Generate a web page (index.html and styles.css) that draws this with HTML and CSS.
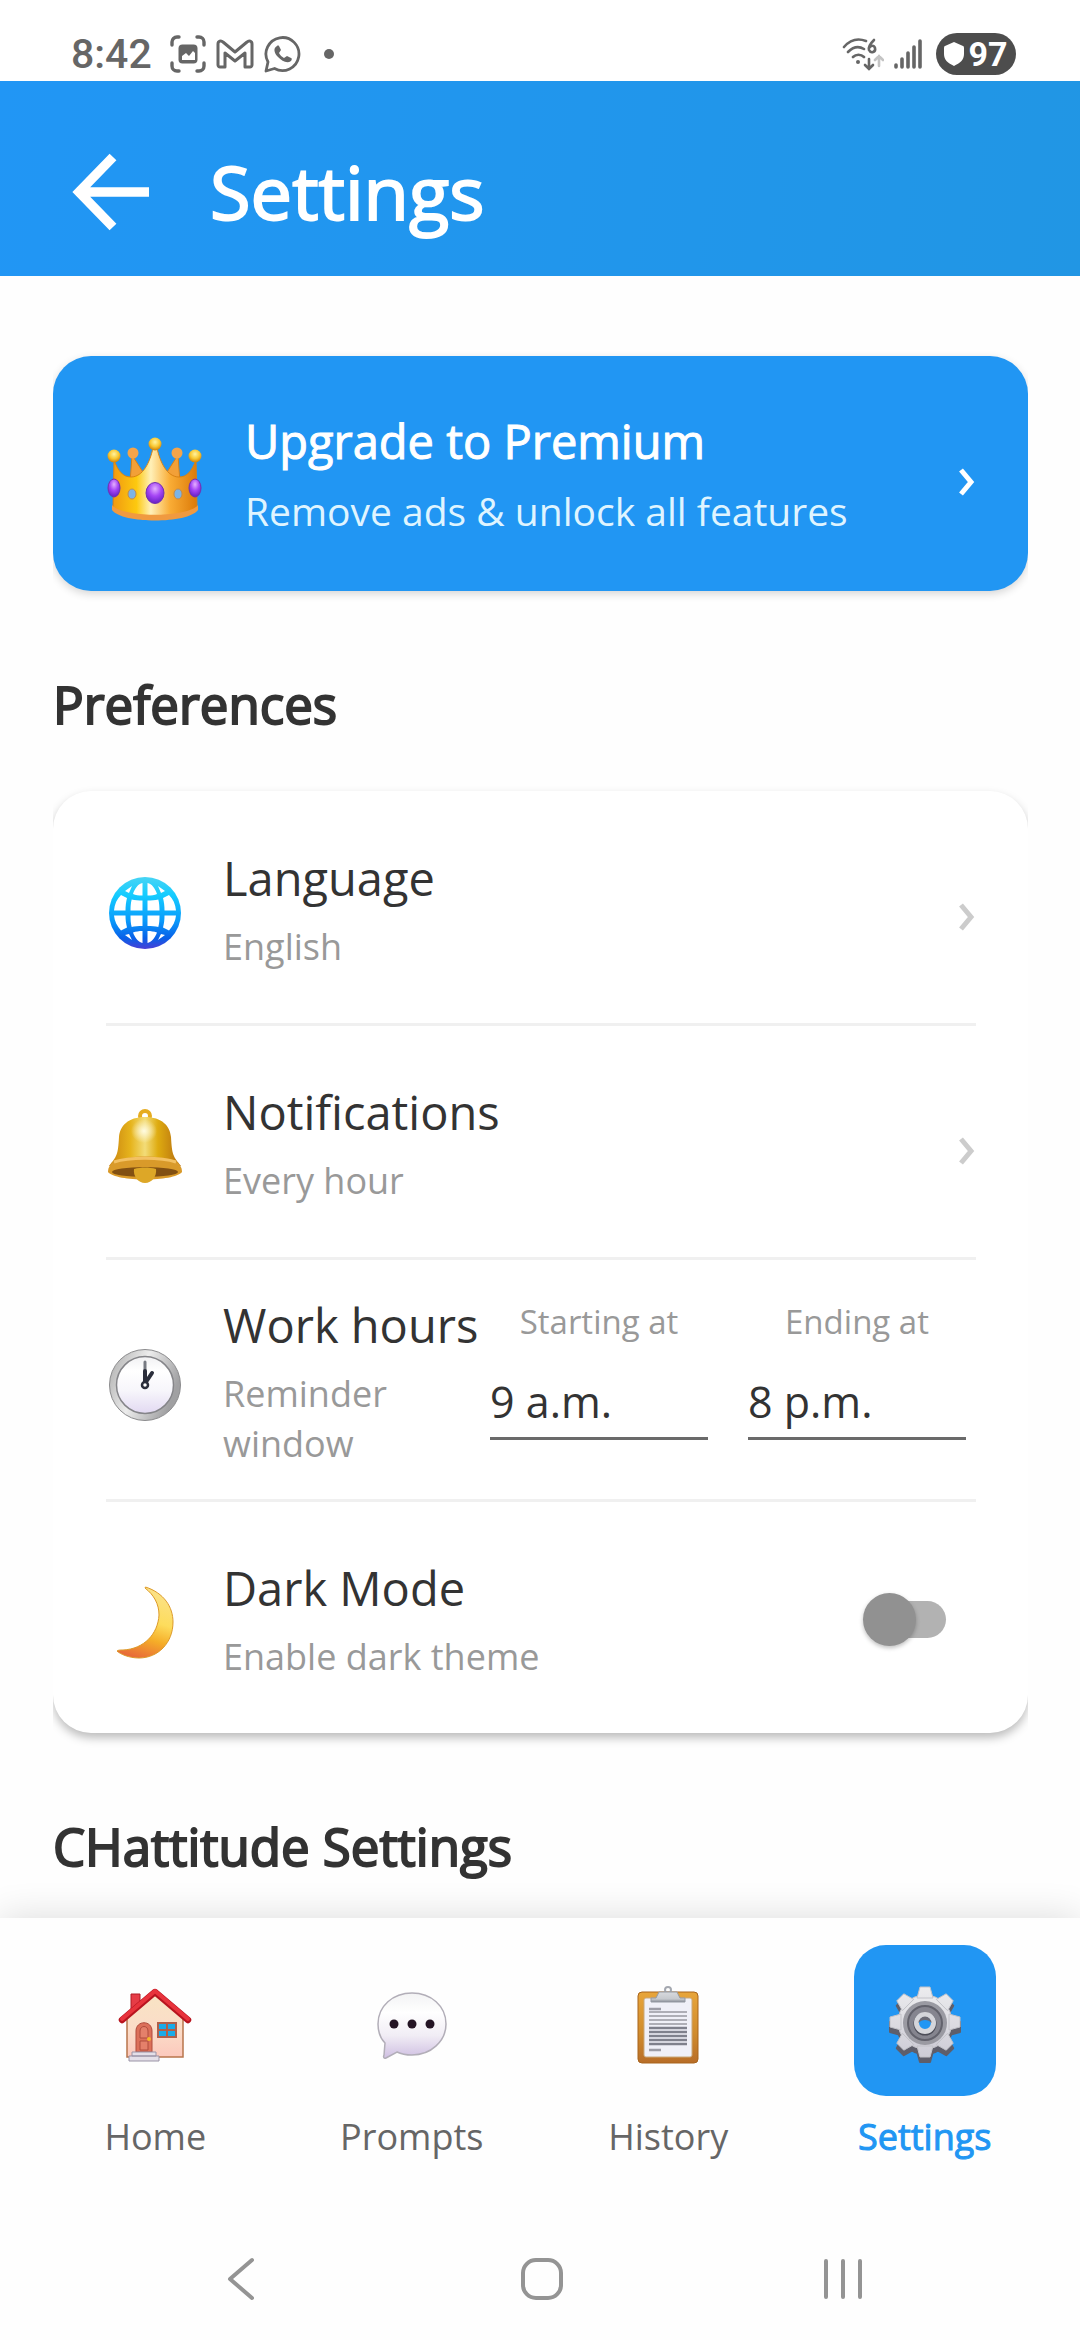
FILE: index.html
```html
<!DOCTYPE html>
<html lang="en">
<head>
<meta charset="utf-8">
<meta name="viewport" content="width=device-width, initial-scale=1">
<title>Settings</title>
<link rel="stylesheet" href="styles.css">
</head>
<body>
<div class="status-bar">
  <span class="clock">8:42</span>
  <svg class="status-icon capture" width="36" height="38" viewBox="0 0 36 38" fill="none" stroke="#666" stroke-width="3.4" stroke-linecap="round">
    <path d="M2 10V7a5 5 0 0 1 5-5h2M27 2h2a5 5 0 0 1 5 5v3M34 28v3a5 5 0 0 1-5 5h-2M9 36H7a5 5 0 0 1-5-5v-3"/>
    <rect x="8.500" y="9.500" width="19" height="19" rx="4" fill="#666" stroke="none"/>
    <path d="M12 25v-4l4-3 3 3 4-5 2 2v7z" fill="#fff" stroke="none"/>
  </svg>
  <svg class="status-icon mail" width="38" height="30" viewBox="0 0 38 30" fill="none" stroke="#666" stroke-width="3" stroke-linejoin="round">
    <path d="M2 26V5c0-3 3-4 5-2l12 10L31 3c2-2 5-1 5 2v21c0 1-1 2-2 2h-5V14L19 22 9 14v14H4c-1 0-2-1-2-2z"/>
  </svg>
  <svg class="status-icon chat" width="38" height="38" viewBox="0 0 38 38" fill="none" stroke="#666" stroke-width="2.8" stroke-linejoin="round">
    <path d="M2 36l2-9a16.500 16.500 0 1 1 6.500 6.500z"/>
    <path d="M13 11c-4 2-3 7 1 11s9 7 13 4c1-1 1-3 0-3l-4-2-3 2c-2-1-4-3-5-5l2-3-2-4c-1-1-1-1-2 0z" fill="#666" stroke="none"/>
  </svg>
  <svg class="status-icon more" width="10" height="10" viewBox="0 0 10 10"><circle cx="5" cy="5" r="5" fill="#666"/></svg>
  <span class="spacer"></span>
  <svg class="status-icon wifi" width="42" height="34" viewBox="0 0 42 34" fill="none" stroke="#666" stroke-width="2.600" stroke-linecap="round">
    <path d="M2 10C8 3 16 1 24 4M6 15c5-5 11-6 16-3M11 20c3-3 8-3 11 0"/>
    <circle cx="16" cy="25" r="2" fill="#666" stroke="none"/>
    <path d="M32 3c-4 4-6 7-5 10 2 4 7 2 6-2-1-3-4-3-6 0"/>
    <path d="M27 22v9M23 28l4 4 4-4"/>
    <path d="M37 29V19M33 23l4-4 4 4" stroke="#c4c4c4"/>
  </svg>
  <svg class="status-icon signal" width="28" height="30" viewBox="0 0 28 30" stroke="#666" stroke-width="3.600" stroke-linecap="round">
    <path d="M2 26v2M8 20v8M14 14v14M20 8v20M26 2v26"/>
  </svg>
  <span class="battery">
    <svg width="20" height="24" viewBox="0 0 20 24"><path d="M10 0l9 4q1 0 1 2v6c0 6-4 9-10 12C4 21 0 18 0 12V6q0-2 1-2z" fill="#fff"/></svg>
    <span>97</span>
  </span>
</div>

<header class="app-header">
  <button class="back" type="button" aria-label="Back">
    <svg width="80" height="80" viewBox="0 0 80 80" fill="none" stroke="#fff" stroke-width="9.500">
      <path d="M79 40H9M43 5L9 40l34 35"/>
    </svg>
  </button>
  <h1 class="app-title">Settings</h1>
</header>

<main class="content">
  <button class="premium" type="button">
    <svg class="crown" width="96" height="96" viewBox="0 0 96 96">
      <defs>
        <linearGradient id="crown-gold" x1="0" x2="1" y1="0" y2="0">
          <stop offset="0" stop-color="#f09a10"/><stop offset=".28" stop-color="#fdc90f"/><stop offset=".45" stop-color="#fff0b8"/><stop offset=".68" stop-color="#f9ac35"/><stop offset="1" stop-color="#dc7a08"/>
        </linearGradient>
        <radialGradient id="crown-ball" cx=".5" cy=".35" r=".6"><stop offset="0" stop-color="#fff3a0"/><stop offset=".6" stop-color="#f8c832"/><stop offset="1" stop-color="#d48a10"/></radialGradient>
        <radialGradient id="crown-gem" cx=".5" cy=".3" r=".7"><stop offset="0" stop-color="#e4b0ff"/><stop offset=".5" stop-color="#a545f5"/><stop offset="1" stop-color="#6420c4"/></radialGradient>
      </defs>
      <path d="M26 29l-2 28h20zM72 29l2 28H54z" fill="#f2a038" stroke="#d68016"/>
      <circle cx="27" cy="27" r="5.500" fill="#f3a44a"/><circle cx="71" cy="27" r="5.500" fill="#f3a44a"/>
      <path d="M8 34C12 45 17 51 25 51 37 51 44 36 47 22h4c3 14 10 29 22 29 8 0 13-6 17-17l1 48c-10 13-74 13-84 0z" fill="url(#crown-gold)" stroke="#d98213"/>
      <path d="M6 79c10 13 76 13 86 0v5c-10 14-76 14-86 0z" fill="#f09a40"/>
      <circle cx="8" cy="30" r="6.500" fill="url(#crown-ball)"/><circle cx="49" cy="18" r="6.500" fill="url(#crown-ball)"/><circle cx="89" cy="30" r="6.500" fill="url(#crown-ball)"/>
      <g fill="url(#crown-gem)" stroke="#7230b0"><ellipse cx="49" cy="67" rx="9" ry="10.500"/><ellipse cx="8" cy="62" rx="6" ry="9"/><ellipse cx="89" cy="62" rx="6" ry="9"/></g>
      <g fill="#7cb4e6" stroke="#bd8b52"><ellipse cx="26" cy="68" rx="4" ry="5"/><ellipse cx="72" cy="68" rx="4" ry="5"/></g>
    </svg>
    <span class="premium-text">
      <span class="premium-title">Upgrade to Premium</span>
      <span class="premium-sub">Remove ads &amp; unlock all features</span>
    </span>
    <svg class="chevron" width="18" height="44" viewBox="0 0 18 44"><path d="M3 18l10 12L3 42"/></svg>
  </button>

  <h2 class="section-title">Preferences</h2>

  <section class="card">
    <a class="row" href="#language">
      <svg class="row-icon" width="78" height="86" viewBox="0 0 78 86">
        <defs><linearGradient id="globe" x1="0" x2="0" y1="0" y2="1"><stop offset="0" stop-color="#48d4f4"/><stop offset=".25" stop-color="#15ccff"/><stop offset=".6" stop-color="#0a9cfb"/><stop offset=".85" stop-color="#0860e8"/><stop offset="1" stop-color="#4a3fd6"/></linearGradient></defs>
        <circle cx="39" cy="47" r="36" fill="url(#globe)"/>
        <g fill="#fff">
          <path d="M36.500 17v12.500c-4 0-7-.5-9.500-1.500 2-6 5-10 9.500-11zM41.500 17v12.500c4 0 7-.5 9.500-1.500-2-6-5-10-9.500-11z"/>
          <path d="M26 20l-7 5 4 2zM52 20l7 5-4 2z"/>
          <path d="M36.500 34.500V44.500H24.500c0-4 .3-8 1.200-11 3 .7 7 1 10.800 1zM41.500 34.500V44.500H53.500c0-4-.3-8-1.200-11-3 .7-7 1-10.800 1z"/>
          <path d="M15 29l6 3c-1 4-1.500 8-1.500 12.500H8C8.500 38 11 33 15 29zM63 29l-6 3c1 4 1.500 8 1.500 12.500H70C69.500 38 67 33 63 29z"/>
          <path d="M8 49.500h11.500c0 4.500.5 8 1.500 12l-6 3C11 60 8.500 55 8 49.500zM70 49.500H58.500c0 4.500-.5 8-1.500 12l6 3c4-4.500 6.500-9.500 7-15z"/>
          <path d="M24.500 49.500H36.500V60c-4 0-8 .3-10.800 1-.9-3-1.200-7-1.200-11.500zM53.500 49.500H41.500V60c4 0 8 .3 10.800 1 .9-3 1.200-7 1.200-11.500z"/>
          <path d="M36.500 65v12c-4-1-7.500-5-9.500-10.500 3-1 6-1.500 9.500-1.500zM41.500 65v12c4-1 7.500-5 9.500-10.500-3-1-6-1.500-9.500-1.500z"/>
          <path d="M19 69l4-1 3 6zM59 69l-4-1-3 6z"/>
        </g>
      </svg>
      <span class="row-text"><span class="row-title">Language</span><span class="row-sub">English</span></span>
      <svg class="chevron" width="18" height="44" viewBox="0 0 18 44"><path d="M3 18l10 12L3 42"/></svg>
    </a>

    <a class="row" href="#notifications">
      <svg class="row-icon" width="78" height="86" viewBox="0 0 78 86">
        <defs>
          <linearGradient id="bell" x1="0" x2="1" y1="0" y2="0"><stop offset="0" stop-color="#c98310"/><stop offset=".3" stop-color="#e6b41c"/><stop offset=".5" stop-color="#f3dc78"/><stop offset=".68" stop-color="#deab10"/><stop offset="1" stop-color="#b56c10"/></linearGradient>
          <radialGradient id="bell-shine"><stop offset="0" stop-color="#fffbe0"/><stop offset="1" stop-color="#fffbe0" stop-opacity="0"/></radialGradient>
        </defs>
        <circle cx="39" cy="16" r="5" fill="none" stroke="#e6ac20" stroke-width="4"/>
        <path d="M39 17C22 17 14 26 13 37c-1 18-2 19-10 29h72c-8-10-9-11-10-29-1-11-9-20-26-20z" fill="url(#bell)"/>
        <ellipse cx="38" cy="31" rx="13" ry="12" fill="url(#bell-shine)"/>
        <path d="M8 61c15-6 47-6 62 0 5 4 6 8 6 11-8 10-66 10-74 0 0-3 1-7 6-11z" fill="#d99a2a"/>
        <ellipse cx="39" cy="72" rx="33" ry="5" fill="#825012"/>
        <path d="M28 69c7-2 15-2 22 0 1 7-4 14-11 14s-12-7-11-14z" fill="#dda727"/>
        <path d="M8 62c15-5 47-5 62 0" stroke="#f3c163" stroke-width="3" fill="none"/>
      </svg>
      <span class="row-text"><span class="row-title">Notifications</span><span class="row-sub">Every hour</span></span>
      <svg class="chevron" width="18" height="44" viewBox="0 0 18 44"><path d="M3 18l10 12L3 42"/></svg>
    </a>

    <div class="row row-hours">
      <svg class="row-icon" width="78" height="86" viewBox="0 0 78 86">
        <defs>
          <linearGradient id="rim" x1="0" x2="1" y1="0" y2=".4"><stop offset="0" stop-color="#aaa"/><stop offset=".5" stop-color="#ececec"/><stop offset="1" stop-color="#a0a0a2"/></linearGradient>
          <linearGradient id="dial" x1="0" x2="0" y1="0" y2="1"><stop offset="0" stop-color="#f1f1f3"/><stop offset=".25" stop-color="#fff"/><stop offset=".6" stop-color="#f7f6fb"/><stop offset="1" stop-color="#e2d9f2"/></linearGradient>
        </defs>
        <circle cx="39" cy="47" r="35.500" fill="url(#rim)" stroke="#8b8b8d"/>
        <circle cx="39" cy="47" r="28.500" fill="url(#dial)" stroke="#858589" stroke-width="1.500"/>
        <path d="M39 44V24" stroke="#777a82" stroke-width="3" stroke-linecap="round"/>
        <path d="M39 44V33M40 44l6-9" stroke="#2b2e3b" stroke-width="4" stroke-linecap="round"/>
        <circle cx="39" cy="47" r="3" fill="#fff" stroke="#2b2e3b" stroke-width="2.500"/>
      </svg>
      <span class="row-text"><span class="row-title">Work hours</span><span class="row-sub">Reminder window</span></span>
      <div class="fields">
        <div class="field"><label for="start">Starting at</label><input id="start" type="text" value="9 a.m."></div>
        <div class="field"><label for="end">Ending at</label><input id="end" type="text" value="8 p.m."></div>
      </div>
    </div>

    <label class="row">
      <svg class="row-icon" width="78" height="86" viewBox="0 0 78 86">
        <defs><linearGradient id="moon" x1=".6" x2=".35" y1="0" y2="1"><stop offset="0" stop-color="#fbe28a"/><stop offset=".45" stop-color="#fddc5c"/><stop offset=".7" stop-color="#f5ad28"/><stop offset="1" stop-color="#e86a38"/></linearGradient></defs>
        <path d="M39.500 11C58 17 67 31 67 46c0 21-15 36-34 36-10 0-19-4-22-7 1-1 3-1 6-1 21-1 35-16 36-35 0-11-5-20-14-27z" fill="url(#moon)" stroke="#dd9a28"/>
      </svg>
      <span class="row-text"><span class="row-title">Dark Mode</span><span class="row-sub">Enable dark theme</span></span>
      <input class="switch" type="checkbox" role="switch">
    </label>
  </section>

  <h2 class="section-title">CHattitude Settings</h2>
</main>

<nav class="tab-bar" aria-label="Main">
  <a class="tab" href="#home">
    <span class="tile"><svg width="78" height="86" viewBox="0 0 78 86">
      <defs><linearGradient id="wall" x1="0" x2="0" y1="0" y2="1"><stop offset="0" stop-color="#f8e4c4"/><stop offset=".6" stop-color="#fbdcc8"/><stop offset="1" stop-color="#fcc8bc"/></linearGradient></defs>
      <path d="M15 34V16h9v12z" fill="#e63c46" stroke="#b01a24"/>
      <path d="M11 38L39 15l28 23v41H11z" fill="url(#wall)" stroke="#b8764c" stroke-width="1.500"/>
      <path d="M6 42L39 14l33 28" fill="none" stroke="#b8141f" stroke-width="6.500" stroke-linecap="round" stroke-linejoin="round"/>
      <path d="M6 41L39 13l33 28" fill="none" stroke="#e8333c" stroke-width="4" stroke-linecap="round" stroke-linejoin="round"/>
      <path d="M20 74V53c0-11 16-11 16 0v21z" fill="#dc705a" stroke="#b04c3c"/>
      <path d="M24 60v-7c0-6 8-6 8 0v7zM24 63h8v9h-8z" fill="#e4806a" stroke="#b04c3c"/>
      <circle cx="33" cy="61" r="2" fill="#f5b82e"/>
      <path d="M42 45h18v14H42z" fill="#1aabe8" stroke="#b0604a" stroke-width="2"/><path d="M51 45v14M42 52h18" stroke="#b0604a" stroke-width="2"/>
      <path d="M16 74h24v4H16zM13 78h30v5H13z" fill="#e4dfe8" stroke="#9a93a6"/>
    </svg></span>
    <span class="tab-label">Home</span>
  </a>
  <a class="tab" href="#prompts">
    <span class="tile"><svg width="78" height="86" viewBox="0 0 78 86">
      <defs><linearGradient id="bubble" x1="0" x2="0" y1="0" y2="1"><stop offset="0" stop-color="#f3f3f4"/><stop offset=".3" stop-color="#fff"/><stop offset=".65" stop-color="#f1edf5"/><stop offset="1" stop-color="#cfbfe2"/></linearGradient></defs>
      <path d="M39 15c19 0 34 13 34 31 0 17-15 31-34 31-6 0-11-1-15-3l-11 6c-2 1-3-1-2-3l1-12C7 60 5 53 5 46c0-18 15-31 34-31z" fill="url(#bubble)" stroke="#b2aeb8" stroke-width="1.500"/>
      <g fill="#241424"><circle cx="21" cy="46" r="4.500"/><circle cx="39" cy="46" r="4.500"/><circle cx="57" cy="46" r="4.500"/></g>
    </svg></span>
    <span class="tab-label">Prompts</span>
  </a>
  <a class="tab" href="#history">
    <span class="tile"><svg width="78" height="86" viewBox="0 0 78 86">
      <defs>
        <linearGradient id="board" x1="0" x2="0" y1="0" y2="1"><stop offset="0" stop-color="#e8a53a"/><stop offset=".6" stop-color="#cf8a2c"/><stop offset="1" stop-color="#b86d28"/></linearGradient>
        <linearGradient id="clip" x1="0" x2="0" y1="0" y2="1"><stop offset="0" stop-color="#d8dade"/><stop offset=".7" stop-color="#c6c9ce"/><stop offset="1" stop-color="#868b95"/></linearGradient>
      </defs>
      <rect x="9" y="14" width="60" height="71" rx="4" fill="url(#board)" stroke="#a8641c"/>
      <path d="M17 20h44c1 0 2 1 2 2v55c0 1-1 2-2 2H17c-1 0-2-1-2-2V22c0-1 1-2 2-2z" fill="#f0f0f8" stroke="#c9a87a"/>
      <path d="M20 31h12M20 72h12" stroke="#9c9ca6" stroke-width="2.500"/>
      <path d="M20 34h38M20 38h38M20 42h38M20 46h38" stroke="#aeaeb6" stroke-width="2"/>
      <path d="M20 50h38M20 54h38M20 58h38M20 62h38M20 66h38" stroke="#7f808c" stroke-width="2.500"/>
      <circle cx="39" cy="12" r="3" fill="none" stroke="#a4a8b0" stroke-width="2"/>
      <path d="M30 14h18l3 6h5v4H22v-4h5z" fill="url(#clip)" stroke="#9499a2"/>
    </svg></span>
    <span class="tab-label">History</span>
  </a>
  <a class="tab tab-active" href="#settings" aria-current="page">
    <span class="tile"><svg width="78" height="86" viewBox="0 0 78 86">
      <defs>
        <linearGradient id="gear" x1="0" x2="0" y1="0" y2="1"><stop offset="0" stop-color="#ececee"/><stop offset="1" stop-color="#cdccd6"/></linearGradient>
        <g id="cog"><circle cx="39" cy="44" r="27"/><path d="M31 20l3-11h10l3 11zM31 68l3 11h10l3-11zM15 36L4 39v10l11 3zM63 36l11 3v10l-11 3zM16.400 32.700L10.800 22.800l7-7 9.900 5.600zM61.600 32.700l5.600-9.900-7-7-9.900 5.600zM16.400 55.300l-5.600 9.900 7 7 9.900-5.600zM61.600 55.300l5.600 9.900-7 7-9.900-5.600z"/></g>
      </defs>
      <use href="#cog" y="5" fill="#5e5e6a" stroke="#5e5e6a" stroke-width="2" stroke-linejoin="round"/>
      <use href="#cog" fill="url(#gear)" stroke="#c2c2c8" stroke-width="1" stroke-linejoin="round"/>
      <circle cx="39" cy="45" r="22" fill="#9a9aa2"/>
      <circle cx="39" cy="45" r="17" fill="#85858f" stroke="#62626c" stroke-width="2"/>
      <circle cx="39" cy="46" r="11.500" fill="#4c4d58"/>
      <circle cx="39" cy="45" r="8.500" fill="#2196f3" stroke="#d4d5da" stroke-width="5"/>
      <path d="M32.500 45a6.500 6.500 0 0 1 13 0c-3-4-10-4-13 0z" fill="#6a6a75"/>
    </svg></span>
    <span class="tab-label">Settings</span>
  </a>
</nav>

<div class="system-bar">
  <button type="button" aria-label="System back"><svg width="30" height="44" viewBox="0 0 30 44"><path d="M26 3L4 22l22 19" /></svg></button>
  <button type="button" aria-label="System home"><svg width="44" height="44" viewBox="0 0 44 44"><rect x="3" y="3" width="38" height="38" rx="13"/></svg></button>
  <button type="button" aria-label="Recent apps"><svg width="40" height="44" viewBox="0 0 40 44"><path d="M3 4v36M20 4v36M37 4v36"/></svg></button>
</div>
</body>
</html>
```

FILE: styles.css
```css
* { box-sizing: border-box; }

body {
  margin: 0;
  min-height: 100vh;
  display: flex;
  flex-direction: column;
  background: #fefefe;
  color: #333;
  font-family: "Open Sans", "Noto Sans", sans-serif;
}

button {
  border: 0;
  padding: 0;
  background: none;
  color: inherit;
  font: inherit;
  text-align: left;
}

a { color: inherit; text-decoration: none; }
svg { display: block; flex: none; }

/* Status bar */
.status-bar {
  height: 81px;
  padding: 26px 64px 0 71px;
  display: flex;
  align-items: center;
  gap: 10px;
  background: #fff;
  color: #666;
  font-family: Roboto, sans-serif;
}
.clock { font-size: 41px; line-height: 48px; font-weight: 500; margin-right: 8px; }
.more { margin-left: 12px; }
.spacer { flex: 1; }
.battery {
  height: 42px;
  width: 80px;
  margin-left: 4px;
  border-radius: 21px;
  display: flex;
  align-items: center;
  justify-content: center;
  gap: 4px;
  background: #4d4d4d;
  color: #fff;
  font-size: 34px;
  line-height: 42px;
  font-weight: 700;
}

/* App header */
.app-header {
  padding: 61px 70px 34px;
  display: flex;
  align-items: center;
  gap: 60px;
  background: linear-gradient(100deg, #2196f5, #2196e4);
  color: #fff;
}
.app-title {
  margin: 0;
  font-size: 74px;
  line-height: 100px;
  font-weight: 400;
  -webkit-text-stroke: 2px currentColor;
}

/* Scrolling content; side shadows are cut at the content edges */
.content {
  flex: 1;
  margin: 0 52px 0 53px;
  padding-top: 80px;
  overflow-x: clip;
}

.premium {
  width: 100%;
  padding: 53px 52px 53px 53px;
  border-radius: 38px;
  display: flex;
  align-items: center;
  gap: 43px;
  background: #2196f3;
  color: #fff;
  box-shadow: 0 3px 8px rgba(0, 0, 0, .16);
}
.premium-text { flex: 1; display: flex; flex-direction: column; gap: 11px; }
.premium-title { font-size: 47px; line-height: 64px; -webkit-text-stroke: 1px currentColor; }
.premium-sub { font-size: 39px; line-height: 54px; color: #dff4ff; }

.chevron { fill: none; stroke: #ccc; stroke-width: 5; }
.premium .chevron { stroke: #fff; }

.section-title {
  margin: 77px 0 51px;
  font-size: 51px;
  line-height: 72px;
  font-weight: 400;
  -webkit-text-stroke: 2px currentColor;
}
.section-title:last-child { margin-bottom: 36px; }

.card {
  border-radius: 38px;
  background: #fff;
  box-shadow: 0 5px 10px rgba(0, 0, 0, .26);
  padding: 1px 52px 0 53px;
}
.row {
  padding: 54px 0 51px;
  display: flex;
  align-items: center;
}
.row + .row { border-top: 3px solid #f0f0f0; }
.row-icon { margin-right: 39px; }
.row-hours { padding: 33px 0 30px; }
.row-text { flex: 1; min-width: 0; display: flex; flex-direction: column; gap: 12px; }
.row-title { font-size: 47px; line-height: 64px; white-space: nowrap; }
.row-sub { font-size: 36px; line-height: 50px; color: #999; }

.fields { display: flex; gap: 20px; }
.field { width: 238px; padding: 0 10px 23px; display: flex; flex-direction: column; gap: 28px; }
.field label { font-size: 33px; line-height: 46px; color: #999; text-align: center; }
.field input {
  width: 100%;
  height: 67px;
  padding: 0 0 7px;
  border: 0;
  border-bottom: 3px solid #6a6a6a;
  border-radius: 0;
  background: none;
  color: #333;
  font-family: inherit;
  font-size: 43px;
  line-height: 57px;
}

.switch {
  appearance: none;
  position: relative;
  width: 75px;
  height: 37px;
  margin: 0 30px 0 0;
  border-radius: 19px;
  background: #b2b2b2;
}
.switch::before {
  content: "";
  position: absolute;
  left: -8px;
  top: -8px;
  width: 53px;
  height: 53px;
  border-radius: 50%;
  background: #919191;
  box-shadow: 0 2px 4px rgba(0, 0, 0, .25);
}
.switch:checked::before { left: 30px; background: #2196f3; }

/* Bottom tabs */
.tab-bar {
  padding: 27px 27px 56px;
  display: grid;
  grid-template-columns: repeat(4, 1fr);
  background: #fefefe;
  box-shadow: 0 0 36px rgba(0, 0, 0, .14);
  clip-path: inset(-60px 0 0);
}
.tab { display: flex; flex-direction: column; align-items: center; gap: 16px; color: #666; }
.tile { padding: 33px 32px 32px; border-radius: 32px; }
.tab-label { font-size: 36px; line-height: 50px; }
.tab-active { color: #2196f3; }
.tab-active .tile { background: #2196f3; }
.tab-active .tab-label { -webkit-text-stroke: 1px currentColor; }

/* System navigation */
.system-bar {
  height: 122px;
  padding-left: 4px;
  display: grid;
  grid-template-columns: repeat(3, 28%);
  justify-content: center;
  background: #fefefe;
}
.system-bar button { display: flex; align-items: center; justify-content: center; }
.system-bar svg { fill: none; stroke: #949494; stroke-width: 4; stroke-linecap: round; stroke-linejoin: round; }
```
